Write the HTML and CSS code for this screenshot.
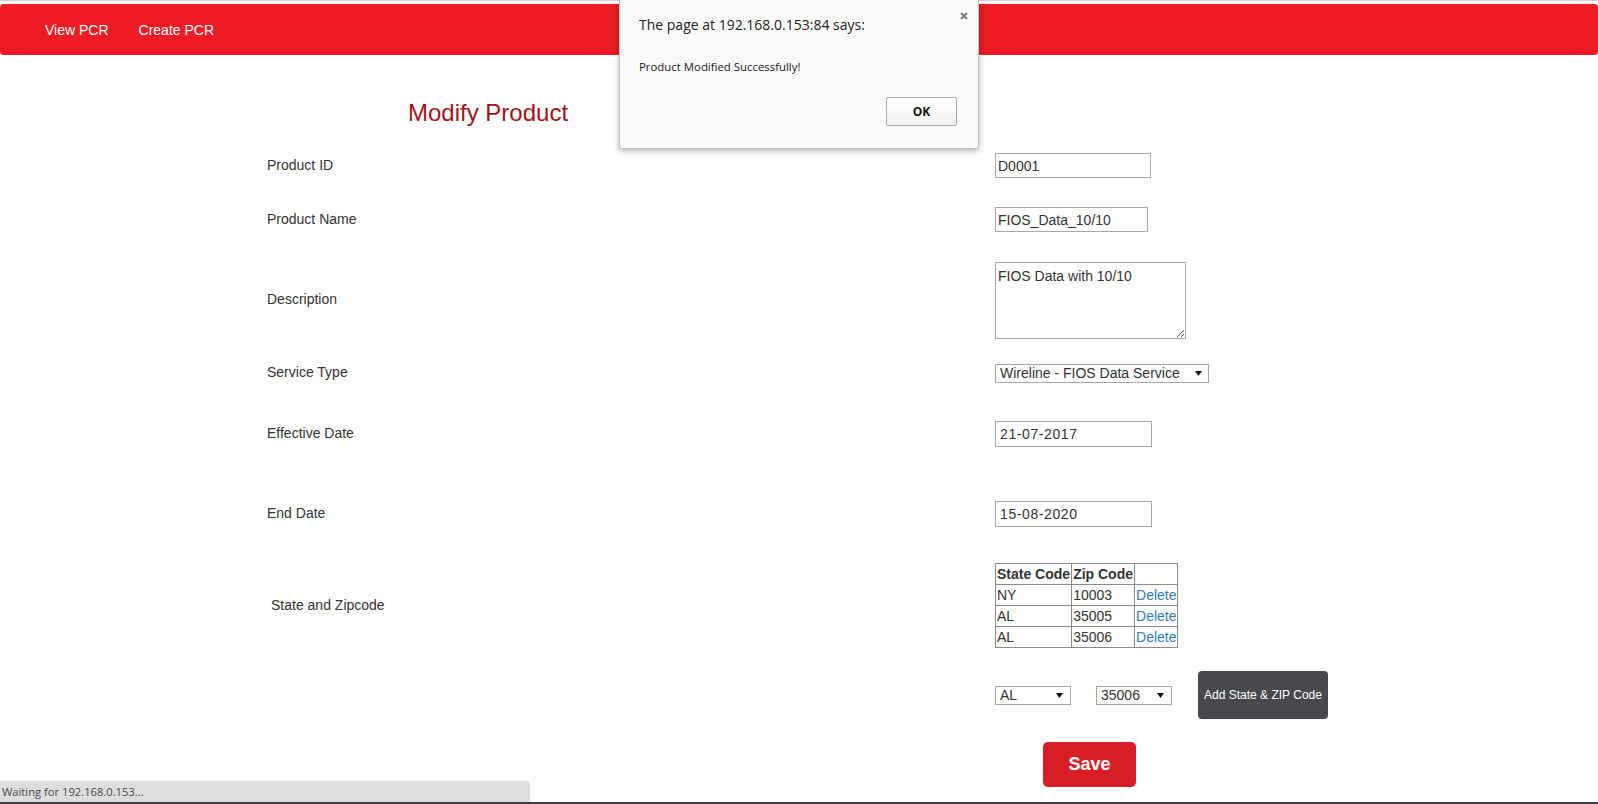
FILE: index.html
```html
<!DOCTYPE html>
<html lang="en">
<head>
<meta charset="utf-8">
<title>Modify Product</title>
<link rel="stylesheet" href="styles.css">
</head>
<body>
<nav class="navbar">
  <ul class="nav">
    <li><a class="nav-link" href="#">View PCR</a></li>
    <li><a class="nav-link" href="#">Create PCR</a></li>
  </ul>
</nav>

<main class="page">
  <h1 class="title">Modify Product</h1>
  <form class="form">
    <label class="label">Product ID</label>
    <div class="field"><input class="input input-id" type="text" value="D0001"></div>

    <label class="label">Product Name</label>
    <div class="field"><input class="input input-name" type="text" value="FIOS_Data_10/10"></div>

    <label class="label label-desc">Description</label>
    <div class="field"><textarea class="textarea">FIOS Data with 10/10</textarea></div>

    <label class="label">Service Type</label>
    <div class="field">
      <div class="select select-service"><span>Wireline - FIOS Data Service</span><svg class="caret" width="7" height="5" viewBox="0 0 7 5"><path d="M0 0H7L3.5 5Z"/></svg></div>
    </div>

    <label class="label">Effective Date</label>
    <div class="field"><input class="input input-date" type="text" value="21-07-2017"></div>

    <label class="label">End Date</label>
    <div class="field"><input class="input input-date" type="text" value="15-08-2020"></div>

    <label class="label label-indent">State and Zipcode</label>
    <div class="field">
      <table class="zip-table">
        <thead>
          <tr><th>State Code</th><th>Zip Code</th><th></th></tr>
        </thead>
        <tbody>
          <tr><td>NY</td><td>10003</td><td><a class="link" href="#">Delete</a></td></tr>
          <tr><td>AL</td><td>35005</td><td><a class="link" href="#">Delete</a></td></tr>
          <tr><td>AL</td><td>35006</td><td><a class="link" href="#">Delete</a></td></tr>
        </tbody>
      </table>
    </div>

    <span class="label"></span>
    <div class="field add-row">
      <div class="select select-small"><span>AL</span><svg class="caret" width="7" height="5" viewBox="0 0 7 5"><path d="M0 0H7L3.5 5Z"/></svg></div>
      <div class="select select-small"><span>35006</span><svg class="caret" width="7" height="5" viewBox="0 0 7 5"><path d="M0 0H7L3.5 5Z"/></svg></div>
      <button class="btn-add" type="button">Add State &amp; ZIP Code</button>
    </div>

    <span class="label"></span>
    <div class="field"><button class="btn-save" type="button">Save</button></div>
  </form>
</main>

<div class="dialog">
  <div class="dialog-title">The page at 192.168.0.153:84 says:</div>
  <svg class="dialog-close" width="8" height="8" viewBox="0 0 8 8"><path d="M1 1L7 7M7 1L1 7"/></svg>
  <div class="dialog-msg">Product Modified Successfully!</div>
  <div class="dialog-actions"><button class="dialog-ok" type="button">OK</button></div>
</div>

<div class="status">Waiting for 192.168.0.153...</div>
<div class="window-edge"></div>
</body>
</html>
```

FILE: styles.css
```css
html, body {
  margin: 0;
  padding: 0;
  overflow: hidden;
}
body {
  background: #fff;
  border-top: 1px solid #d2d2d2;
  font-family: "Liberation Sans", Arial, sans-serif;
  font-size: 14px;
  color: #333;
  height: 803px;
  box-sizing: border-box;
}

/* navbar */
.navbar {
  margin-top: 3px;
  height: 51px;
  background: #ed1c24;
  border-radius: 4px;
}
.nav {
  list-style: none;
  margin: 0;
  padding: 0 0 0 30px;
  display: flex;
}
.nav-link {
  display: block;
  padding: 16px 15px 15px;
  line-height: 20px;
  color: #fff;
  text-decoration: none;
  font-size: 14px;
}

/* page */
.page {
  padding-left: 267px;
}
.title {
  margin: 44px 0 13px 141px;
  font-size: 24px;
  line-height: 28px;
  font-weight: normal;
  color: #a3121b;
}
.form {
  display: grid;
  grid-template-columns: 728px 1fr;
  grid-template-rows: 51px 57px 105px 40px 82px 78px 104px 76px 63px;
  align-items: center;
}
.label {
  font-size: 14px;
  line-height: 16px;
  padding-bottom: 2px;
  color: #333;
}
.label-desc {
  padding-bottom: 4px;
}
.label-indent {
  padding-left: 4px;
  padding-bottom: 0;
}
.field {
  display: flex;
  align-items: center;
}

/* inputs */
.input {
  box-sizing: border-box;
  height: 25px;
  border: 1px solid #a9a9a9;
  padding: 0 2px;
  margin: 0;
  font-family: "Liberation Sans", Arial, sans-serif;
  font-size: 14px;
  color: #333;
  background: #fff;
  outline: none;
}
.input-id { width: 156px; }
.input-name { width: 153px; }
.input-date {
  width: 157px;
  height: 26px;
  padding-left: 4px;
  letter-spacing: 0.6px;
}
.textarea {
  box-sizing: border-box;
  width: 191px;
  height: 77px;
  border: 1px solid #a9a9a9;
  padding: 5px 2px 3px;
  margin: 0;
  font-family: "Liberation Sans", Arial, sans-serif;
  font-size: 14px;
  line-height: 16px;
  color: #333;
  resize: both;
}

/* fake selects */
.select {
  box-sizing: border-box;
  height: 19px;
  border: 1px solid #a6a6a6;
  padding: 0 6px 0 4px;
  display: flex;
  align-items: center;
  justify-content: space-between;
  font-size: 14px;
  line-height: 17px;
  color: #333;
  background: #fff;
}
.select-service { width: 214px; }
.select-small { width: 76px; padding-right: 7px; }
.caret { fill: #111; }

/* table */
.zip-table {
  border-collapse: collapse;
  font-size: 14px;
  line-height: 18px;
}
.zip-table th,
.zip-table td {
  border: 1px solid #8a8a8a;
  padding: 1px;
  text-align: left;
  color: #333;
}
.zip-table th {
  font-weight: bold;
}
.zip-table thead th {
  height: 18px;
}
.link {
  color: #337ab7;
  text-decoration: none;
}

/* add row */
.add-row {
  gap: 25px;
}
.btn-add {
  width: 130px;
  height: 48px;
  margin-left: 1px;
  border: none;
  border-radius: 4px;
  background: #47494d;
  color: #fff;
  font-family: "Liberation Sans", Arial, sans-serif;
  font-size: 12px;
  padding: 0;
}
.btn-save {
  margin-left: 48px;
  width: 93px;
  height: 45px;
  border: none;
  border-radius: 5px;
  background: #d81f27;
  color: #fff;
  font-family: "Liberation Sans", Arial, sans-serif;
  font-size: 18px;
  font-weight: bold;
  padding: 0;
}

/* alert dialog */
.dialog {
  position: absolute;
  left: 619px;
  top: 0;
  width: 360px;
  height: 149px;
  box-sizing: border-box;
  background: #fafafa;
  border: 1px solid #c2c2c2;
  border-top: none;
  border-radius: 0 0 3px 3px;
  box-shadow: 0 2px 6px rgba(0, 0, 0, 0.3);
  padding: 15px 21px 0 19px;
  font-family: "Open Sans", "Noto Sans", sans-serif;
  color: #222;
}
.dialog-title {
  font-size: 14px;
  line-height: 20px;
}
.dialog-close {
  position: absolute;
  top: 12px;
  right: 10px;
  stroke: #7a7a7a;
  stroke-width: 2;
}
.dialog-msg {
  margin-top: 24px;
  font-size: 11.4px;
  line-height: 16px;
}
.dialog-actions {
  margin-top: 22px;
  display: flex;
  justify-content: flex-end;
}
.dialog-ok {
  width: 71px;
  height: 29px;
  border: 1px solid #acacac;
  border-radius: 2px;
  background: linear-gradient(#fefefe, #f1f1f1);
  font-family: "Open Sans", "Noto Sans", sans-serif;
  font-size: 12px;
  font-weight: bold;
  color: #111;
  padding: 0;
}

/* status bar */
.status {
  position: fixed;
  left: 0;
  bottom: 2px;
  width: 530px;
  height: 21px;
  box-sizing: border-box;
  padding-left: 2px;
  background: #dedede;
  border-top-right-radius: 4px;
  font-family: "Open Sans", "Noto Sans", sans-serif;
  font-size: 11.2px;
  line-height: 21px;
  color: #4a4a4a;
}
.window-edge {
  position: fixed;
  left: 0;
  right: 0;
  bottom: 0;
  height: 2px;
  background: #3b3e43;
}
```
